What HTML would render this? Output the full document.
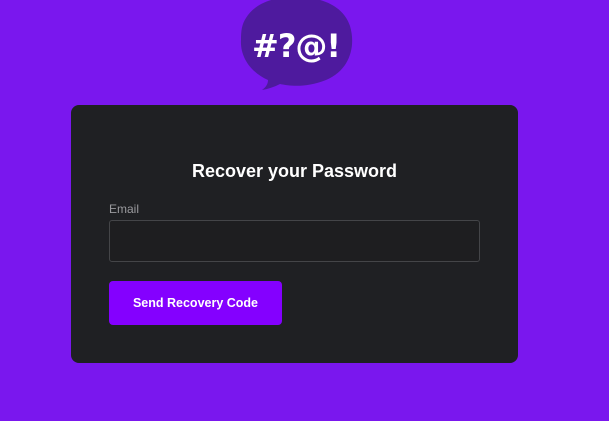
<!DOCTYPE html>
<html><head><meta charset="utf-8"><style>
html,body{margin:0;padding:0;width:609px;height:421px;background:#7a17ee;overflow:hidden;font-family:"Liberation Sans",sans-serif;position:relative}
.card{position:absolute;left:71px;top:105px;width:447px;height:258px;background:#1f2023;border-radius:8px}
h1{position:absolute;left:71px;width:447px;top:161px;margin:0;text-align:center;color:#fff;font-size:18px;font-weight:bold}
.lbl{position:absolute;left:109px;top:202px;color:#9a9a9e;font-size:12px}
.inp{position:absolute;left:109px;top:220px;width:369px;height:40px;border:1px solid #444548;border-radius:3px;background:#1e1e20}
.btn{position:absolute;left:109px;top:281px;width:173px;height:44px;background:#8400ff;border-radius:4px;color:#fff;font-weight:bold;font-size:12.5px;text-align:center;line-height:44px}
</style></head><body>
<svg style="position:absolute;left:0;top:0" width="609" height="100" viewBox="0 0 609 100">
<path d="M246 18 C256 2 276 -4 300 -3 C326 -2 344 8 350 26 C356 46 350 70 326 80 C306 88 290 86 280 84 C274 87 268 89 262 90 C266 87 268 84 268 80 C250 72 240 56 241 40 C241 30 242 24 246 18 Z" fill="#4e1a9e"/>
<text x="296" y="57" text-anchor="middle" fill="#fff" font-family="DejaVu Sans,sans-serif" font-weight="bold" font-size="32" letter-spacing="-1">#?@!</text>
</svg>
<div class="card"></div>
<h1>Recover your Password</h1>
<div class="lbl">Email</div>
<div class="inp"></div>
<div class="btn">Send Recovery Code</div>
</body></html>
